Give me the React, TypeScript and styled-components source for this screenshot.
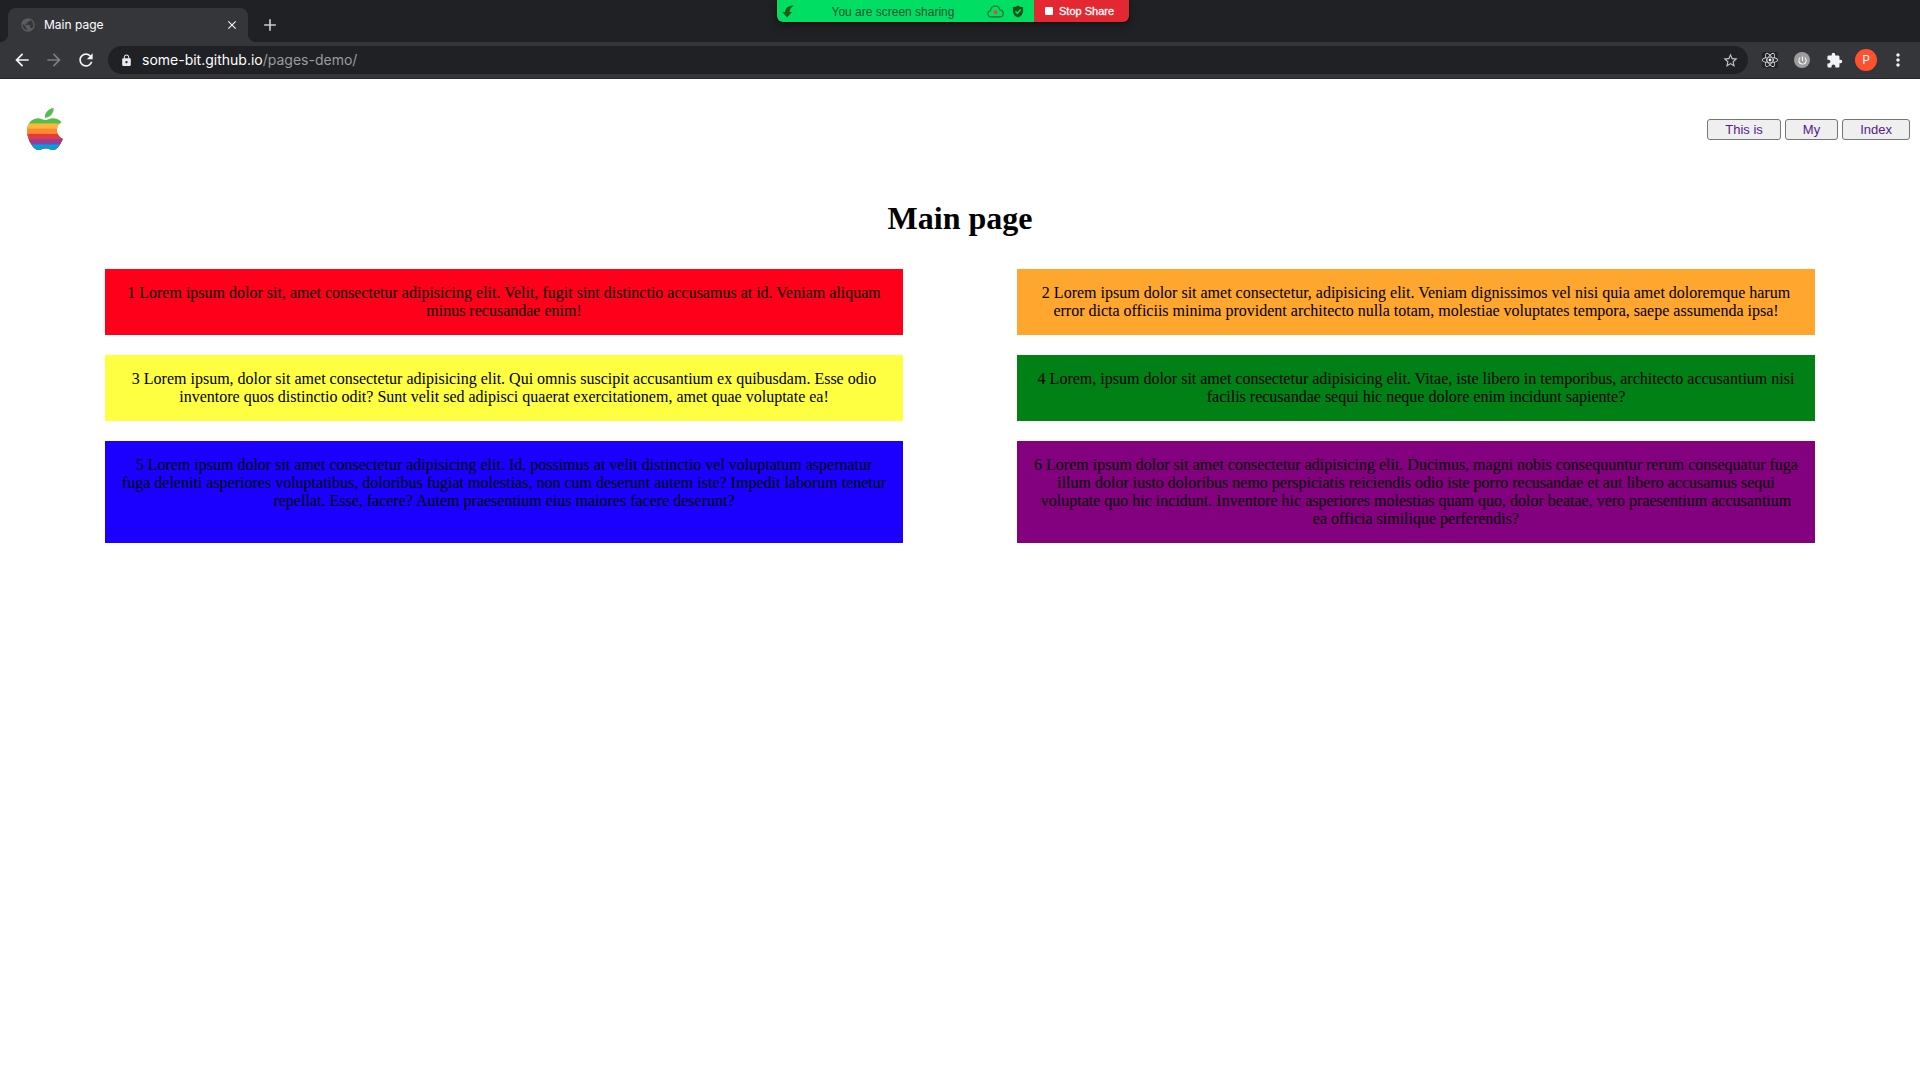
import React from "react";
import styled, { createGlobalStyle } from "styled-components";
import {
  MdAdd,
  MdArrowBack,
  MdArrowForward,
  MdClose,
  MdExtension,
  MdLock,
  MdMoreVert,
  MdPowerSettingsNew,
  MdPublic,
  MdRefresh,
  MdStarBorder,
} from "react-icons/md";
import { FaReact } from "react-icons/fa";

const uiFont = `Inter, Roboto, sans-serif`;
const sansFont = `"Liberation Sans", Arial, sans-serif`;
const serifFont = `"Liberation Serif", "Times New Roman", serif`;

const GlobalStyle = createGlobalStyle`
  *, *::before, *::after { box-sizing: border-box; }
  body { margin: 0; background: #fff; color: #000; font: 16px/18px ${serifFont}; }
  button { font: inherit; color: inherit; }
`;

/* ---------- Browser window ---------- */

const Chrome = styled.div`
  font-family: ${uiFont};
  color: #fff;
  background: #35363a;
  border-bottom: 1px solid #27282b;
`;

const TabStrip = styled.div`
  display: flex;
  align-items: flex-end;
  height: 42px;
  padding-left: 8px;
  background: #202124;
`;

const Tab = styled.div`
  position: relative;
  display: flex;
  align-items: center;
  width: 240px;
  height: 34px;
  padding: 0 8px 0 12px;
  border-radius: 8px 8px 0 0;
  background: #35363a;
  color: #5a5c60;

  &::before,
  &::after {
    content: "";
    position: absolute;
    bottom: 0;
    width: 8px;
    height: 8px;
  }
  &::before {
    right: 100%;
    background: radial-gradient(circle at 0 0, #202124 8px, #35363a 8px);
  }
  &::after {
    left: 100%;
    background: radial-gradient(circle at 100% 0, #202124 8px, #35363a 8px);
  }
`;

const TabTitle = styled.span`
  flex: 1;
  padding-left: 8px;
  font-size: 12px;
  line-height: 16px;
  color: #fff;
`;

const IconButton = styled.button<{ $size: number; $color?: string }>`
  display: flex;
  flex: none;
  align-items: center;
  justify-content: center;
  width: ${(p) => p.$size}px;
  height: ${(p) => p.$size}px;
  padding: 0;
  border: 0;
  background: none;
  color: ${(p) => p.$color ?? "#f1f3f4"};
`;

const NewTab = styled(IconButton)`
  margin: 0 0 5px 10px;
`;

const Toolbar = styled.div`
  display: flex;
  align-items: center;
  height: 36px;
  padding: 0 10px 0 6px;
`;

const NavButtons = styled.div`
  display: flex;
  gap: 8px;
  padding: 0 10px 0 4px;
`;

const AddressBar = styled.div`
  display: flex;
  flex: 1;
  align-items: center;
  height: 28px;
  padding: 0 6px 0 10px;
  border-radius: 14px;
  background: #202124;
`;

const Address = styled.div`
  flex: 1;
  padding-left: 8px;
  font-size: 14px;
  line-height: 20px;
  color: #9a9b9d;
`;

const Host = styled.span`
  color: #fff;
`;

const Extensions = styled.div`
  display: flex;
  gap: 8px;
  padding-left: 10px;
`;

const Disc = styled.span<{ $size: number; $color: string }>`
  display: flex;
  flex: none;
  align-items: center;
  justify-content: center;
  width: ${(p) => p.$size}px;
  height: ${(p) => p.$size}px;
  border-radius: 50%;
  background: ${(p) => p.$color};
  font-size: 12px;
  line-height: 16px;
  color: #fff;
`;

const DarkTile = styled.span`
  display: flex;
  border-radius: 2px;
  background: #242528;
`;

/* ---------- Screen sharing bar, floating above the window ---------- */

const ShareBar = styled.div`
  position: absolute;
  top: 0;
  left: 777px;
  display: flex;
  height: 22px;
  overflow: hidden;
  border-radius: 0 0 6px 6px;
  box-shadow: 0 0 0 1px #0c0d0e, 0 3px 10px rgba(0, 0, 0, 0.4);
`;

const ShareStatus = styled.div`
  display: flex;
  align-items: center;
  width: 257px;
  padding: 0 10px 0 5px;
  gap: 8px;
  background: #00df63;
  color: #14532d;
  font: 12px/16px ${sansFont};
`;

const ShareLabel = styled.span`
  flex: 1;
  padding: 2px 0 0 4px;
  text-align: center;
`;

const StopShare = styled.button`
  display: flex;
  align-items: center;
  gap: 6px;
  width: 95px;
  padding: 0 0 0 11px;
  border: 0;
  background: #e32831;
  color: #fff;
  font: 500 11px/16px ${sansFont};
  white-space: nowrap;
  -webkit-text-stroke: 0.3px #fff;

  &::before {
    content: "";
    width: 8px;
    height: 8px;
    border-radius: 1px;
    background: #fff;
  }
`;

/* ---------- Web page ---------- */

const Page = styled.div`
  padding: 0 8px;
`;

const Header = styled.header`
  display: flex;
  align-items: center;
  justify-content: space-between;
  height: 100px;
`;

const LogoLink = styled.a`
  display: flex;
  padding: 0 19px;
`;

const Nav = styled.nav`
  display: flex;
  gap: 4px;
  padding: 1px 2px 0 0;
`;

const NavButton = styled.button`
  height: 21px;
  padding: 0 17px;
  border: 1px solid #767676;
  border-radius: 3px;
  background: #efefef;
  color: #551a8b;
  font: 13px/18px ${sansFont};
`;

const Title = styled.h1`
  margin: 21px 0 32px;
  font-size: 32px;
  line-height: 37px;
  text-align: center;
`;

const CardList = styled.ul`
  display: flex;
  flex-wrap: wrap;
  justify-content: space-around;
  row-gap: 20px;
  margin: 0;
  padding: 0 40px;
  list-style: none;
`;

const Card = styled.li<{ $color: string }>`
  width: 43.75%;
  padding: 15px;
  background: ${(p) => p.$color};
  text-align: center;
`;

const cards = [
  {
    color: "#ff001b",
    text: "1 Lorem ipsum dolor sit, amet consectetur adipisicing elit. Velit, fugit sint distinctio accusamus at id. Veniam aliquam minus recusandae enim!",
  },
  {
    color: "#ffa62f",
    text: "2 Lorem ipsum dolor sit amet consectetur, adipisicing elit. Veniam dignissimos vel nisi quia amet doloremque harum error dicta officiis minima provident architecto nulla totam, molestiae voluptates tempora, saepe assumenda ipsa!",
  },
  {
    color: "#ffff41",
    text: "3 Lorem ipsum, dolor sit amet consectetur adipisicing elit. Qui omnis suscipit accusantium ex quibusdam. Esse odio inventore quos distinctio odit? Sunt velit sed adipisci quaerat exercitationem, amet quae voluptate ea!",
  },
  {
    color: "#008015",
    text: "4 Lorem, ipsum dolor sit amet consectetur adipisicing elit. Vitae, iste libero in temporibus, architecto accusantium nisi facilis recusandae sequi hic neque dolore enim incidunt sapiente?",
  },
  {
    color: "#1b00ff",
    text: "5 Lorem ipsum dolor sit amet consectetur adipisicing elit. Id, possimus at velit distinctio vel voluptatum aspernatur fuga deleniti asperiores voluptatibus, doloribus fugiat molestias, non cum deserunt autem iste? Impedit laborum tenetur repellat. Esse, facere? Autem praesentium eius maiores facere deserunt?",
  },
  {
    color: "#83007e",
    text: "6 Lorem ipsum dolor sit amet consectetur adipisicing elit. Ducimus, magni nobis consequuntur rerum consequatur fuga illum dolor iusto doloribus nemo perspiciatis reiciendis odio iste porro recusandae et aut libero accusamus sequi voluptate quo hic incidunt. Inventore hic asperiores molestias quam quo, dolor beatae, vero praesentium accusantium ea officia similique perferendis?",
  },
];

const stripes = [
  { y: 0, color: "#55bd4e" },
  { y: 8.8, color: "#ffb63c" },
  { y: 11.8, color: "#ff8833" },
  { y: 14.8, color: "#e53a40" },
  { y: 17.8, color: "#963d98" },
  { y: 20.8, color: "#009fe0" },
];

const AppleLogo = () => (
  <svg width="36" height="42" viewBox="2.2 0 19.7 24" preserveAspectRatio="none" aria-hidden="true">
    <clipPath id="apple">
      <path d="M12.152 6.896c-.948 0-2.415-1.078-3.96-1.04-2.04.027-3.91 1.183-4.961 3.014-2.117 3.675-.546 9.103 1.519 12.09 1.013 1.454 2.208 3.09 3.792 3.039 1.52-.065 2.09-.987 3.935-.987 1.831 0 2.35.987 3.96.948 1.637-.026 2.676-1.48 3.676-2.948 1.156-1.688 1.636-3.325 1.662-3.415-.039-.013-3.182-1.221-3.22-4.857-.026-3.04 2.48-4.494 2.597-4.559-1.429-2.09-3.623-2.324-4.39-2.376-2-.156-3.675 1.09-4.61 1.09zM15.53 3.83c.843-1.012 1.4-2.427 1.245-3.83-1.207.052-2.662.805-3.532 1.818-.78.896-1.454 2.338-1.273 3.714 1.338.104 2.715-.688 3.559-1.701" />
    </clipPath>
    <g clipPath="url(#apple)">
      {stripes.map((s) => (
        <rect key={s.y} x="0" y={s.y} width="24" height="24" fill={s.color} />
      ))}
    </g>
  </svg>
);

const ShareArrow = () => (
  <svg width="13" height="13" viewBox="0 0 13 13" fill="#235b14" aria-hidden="true">
    <path d="M12.4.6C7.600.2 3.600 2.300 3 7H.3l4.900 5.400L10 7H7.600C7.700 4.300 9.200 2 12.400.6z" />
  </svg>
);

const CloudRecord = () => (
  <svg width="17" height="13" viewBox="0 0 17 13" aria-hidden="true">
    <path
      d="M4.300 11.900C2.200 11.900.8 10.700.8 8.800c0-1.700 1.100-2.800 2.700-3C3.800 3 5.700 1 8.300 1c2.400 0 4.100 1.500 4.600 3.900 2 .2 3.300 1.600 3.300 3.500 0 2.100-1.500 3.500-3.600 3.500z"
      fill="none"
      stroke="#166b2b"
      strokeWidth="1.100"
    />
    <circle cx="8.500" cy="7.200" r="2.100" fill="#c65a3c" />
  </svg>
);

const Shield = () => (
  <svg width="12" height="13" viewBox="0 0 12 13" aria-hidden="true">
    <path d="M6 .4c1.500 1 3.200 1.500 5.100 1.600v3.900c0 3-1.900 5.200-5.100 6.600C2.800 11.100.9 8.900.9 5.900V2C2.800 1.900 4.500 1.400 6 .4z" fill="#1d5117" />
    <path d="M3.400 6.300l2 2 3.400-3.700" fill="none" stroke="#00df63" strokeWidth="1.500" />
  </svg>
);

export default function App() {
  return (
    <>
      <GlobalStyle />
      <Chrome>
        <TabStrip>
          <Tab>
            <MdPublic size={16} />
            <TabTitle>Main page</TabTitle>
            <IconButton $size={16} aria-label="Close tab">
              <MdClose size={14} />
            </IconButton>
          </Tab>
          <NewTab $size={24} $color="#c8cacd" aria-label="New tab">
            <MdAdd size={20} />
          </NewTab>
        </TabStrip>
        <Toolbar>
          <NavButtons>
            <IconButton $size={24} aria-label="Back">
              <MdArrowBack size={20} />
            </IconButton>
            <IconButton $size={24} $color="#7c7d80" aria-label="Forward">
              <MdArrowForward size={20} />
            </IconButton>
            <IconButton $size={24} aria-label="Reload">
              <MdRefresh size={20} />
            </IconButton>
          </NavButtons>
          <AddressBar>
            <IconButton $size={16} $color="#e8eaed" aria-label="Site information">
              <MdLock size={13} />
            </IconButton>
            <Address>
              <Host>some-bit.github.io</Host>/pages-demo/
            </Address>
            <IconButton $size={24} $color="#c0c2c5" aria-label="Bookmark this page">
              <MdStarBorder size={17} />
            </IconButton>
          </AddressBar>
          <Extensions>
            <IconButton $size={24} aria-label="React developer tools">
              <DarkTile>
                <FaReact size={16} />
              </DarkTile>
            </IconButton>
            <IconButton $size={24} aria-label="Power extension">
              <Disc $size={16} $color="#9d9d9d">
                <MdPowerSettingsNew size={11} />
              </Disc>
            </IconButton>
            <IconButton $size={24} aria-label="Extensions">
              <MdExtension size={17} />
            </IconButton>
            <IconButton $size={24} aria-label="Profile">
              <Disc $size={22} $color="#ff512f">
                P
              </Disc>
            </IconButton>
            <IconButton $size={24} aria-label="Menu">
              <MdMoreVert size={20} />
            </IconButton>
          </Extensions>
        </Toolbar>
      </Chrome>

      <ShareBar>
        <ShareStatus>
          <ShareArrow />
          <ShareLabel>You are screen sharing</ShareLabel>
          <CloudRecord />
          <Shield />
        </ShareStatus>
        <StopShare>Stop Share</StopShare>
      </ShareBar>

      <Page>
        <Header>
          <LogoLink href="#" aria-label="Home">
            <AppleLogo />
          </LogoLink>
          <Nav>
            <NavButton>This is</NavButton>
            <NavButton>My</NavButton>
            <NavButton>Index</NavButton>
          </Nav>
        </Header>
        <main>
          <Title>Main page</Title>
          <CardList>
            {cards.map((card) => (
              <Card key={card.color} $color={card.color}>
                {card.text}
              </Card>
            ))}
          </CardList>
        </main>
      </Page>
    </>
  );
}
